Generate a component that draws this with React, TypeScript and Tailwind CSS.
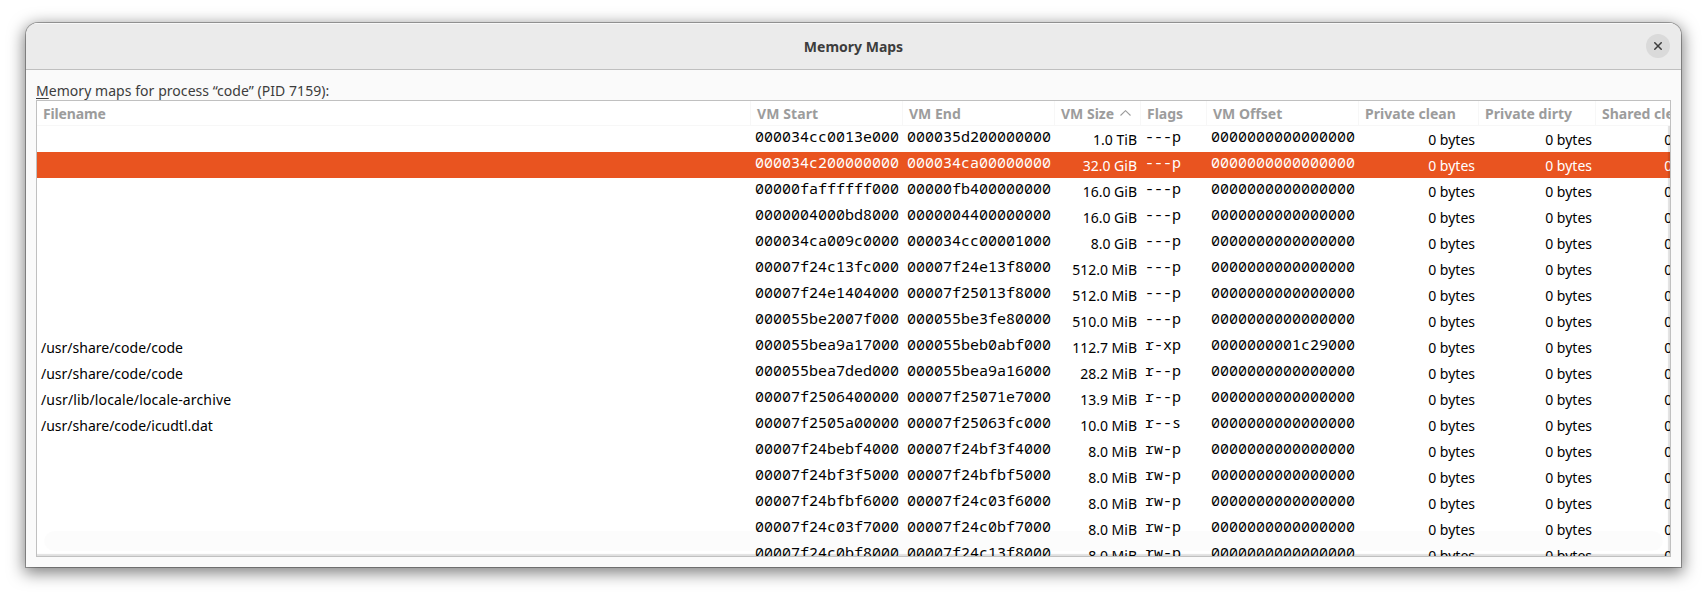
import React from "react";

type MapRow = [file: string, start: string, end: string, size: string, flags: string, offset: string];

const Z = "0000000000000000";

const rows: MapRow[] = [
  ["", "000034cc0013e000", "000035d200000000", "1.0 TiB", "---p", Z],
  ["", "000034c200000000", "000034ca00000000", "32.0 GiB", "---p", Z],
  ["", "00000faffffff000", "00000fb400000000", "16.0 GiB", "---p", Z],
  ["", "0000004000bd8000", "0000004400000000", "16.0 GiB", "---p", Z],
  ["", "000034ca009c0000", "000034cc00001000", "8.0 GiB", "---p", Z],
  ["", "00007f24c13fc000", "00007f24e13f8000", "512.0 MiB", "---p", Z],
  ["", "00007f24e1404000", "00007f25013f8000", "512.0 MiB", "---p", Z],
  ["", "000055be2007f000", "000055be3fe80000", "510.0 MiB", "---p", Z],
  ["/usr/share/code/code", "000055bea9a17000", "000055beb0abf000", "112.7 MiB", "r-xp", "0000000001c29000"],
  ["/usr/share/code/code", "000055bea7ded000", "000055bea9a16000", "28.2 MiB", "r--p", Z],
  ["/usr/lib/locale/locale-archive", "00007f2506400000", "00007f25071e7000", "13.9 MiB", "r--p", Z],
  ["/usr/share/code/icudtl.dat", "00007f2505a00000", "00007f25063fc000", "10.0 MiB", "r--s", Z],
  ["", "00007f24bebf4000", "00007f24bf3f4000", "8.0 MiB", "rw-p", Z],
  ["", "00007f24bf3f5000", "00007f24bfbf5000", "8.0 MiB", "rw-p", Z],
  ["", "00007f24bfbf6000", "00007f24c03f6000", "8.0 MiB", "rw-p", Z],
  ["", "00007f24c03f7000", "00007f24c0bf7000", "8.0 MiB", "rw-p", Z],
  ["", "00007f24c0bf8000", "00007f24c13f8000", "8.0 MiB", "rw-p", Z],
];

const headers = ["Filename", "VM Start", "VM End", "VM Size", "Flags", "VM Offset", "Private clean", "Private dirty", "Shared clean"];

const GRID = "grid w-[1692px] grid-cols-[714px_152px_152px_86px_66px_152px_120px_117px_119px]";

function Mono({ children }: { children: string }) {
  return (
    <div className="whitespace-pre pl-[4px] font-['Noto_Sans_Mono','DejaVu_Sans_Mono',monospace] text-[15px] leading-[21px]">
      {children}
    </div>
  );
}

function Num({ children }: { children: string }) {
  return <div className="whitespace-nowrap pr-[4px] pt-[2px] text-right leading-[24px]">{children}</div>;
}

export default function App() {
  return (
    <div className="h-[596px] overflow-hidden bg-white px-[26px] pb-[29px] pt-[23px] font-['Noto_Sans',sans-serif] text-[14px]">
      <div className="flex h-[544px] w-[1655px] flex-col overflow-hidden rounded-t-[12px] bg-[#fafafa] shadow-[0_0_0_1px_rgba(0,0,0,0.3),0_4px_16px_2px_rgba(0,0,0,0.5)]">
        <header className="grid h-[47px] shrink-0 grid-cols-[1fr_auto_1fr] items-center border-b border-[#bfbfbf] bg-[#ebebeb] px-[11px] shadow-[inset_0_1px_0_#f8f8f8]">
          <span />
          <h1 className="font-bold text-[#3d3d3d]">Memory Maps</h1>
          <button aria-label="Close" className="flex size-6 items-center justify-center justify-self-end rounded-full bg-[#dadada]">
            <svg width="8" height="8" viewBox="0 0 8 8" stroke="#3d3d3d" strokeWidth="1.5">
              <path d="M0.3 0.3 7.7 7.7M7.7 0.3 0.3 7.7" />
            </svg>
          </button>
        </header>
        <div className="flex flex-col px-[10px] pt-[10px]">
          <div className="h-[20px] shrink-0 leading-[21px] tracking-[0.05px] text-[#3d3d3d]">
            <span className="underline underline-offset-2">M</span>emory maps for process “code” (PID 7159):
          </div>
          <div className="relative h-[457px] overflow-hidden border border-[#c0c0c0] bg-white">
            <div className={`${GRID} h-[25px] border-b border-[#f7f7f7] font-bold text-[#9c9c9c]`}>
              {headers.map((h) => (
                <div
                  key={h}
                  className={`flex items-center whitespace-nowrap border-r border-[#f7f7f7] pl-[6px] pt-px leading-[24px] ${h === "Filename" ? "tracking-[-0.15px]" : ""} ${h === "VM Start" ? "tracking-[0.1px]" : ""}`}
                >
                  {h}
                  {h === "VM Size" && (
                    <svg className="ml-[6px] mb-[3px]" width="11" height="6" viewBox="0 0 11 6" fill="none" stroke="#9c9c9c" strokeWidth="1.1">
                      <path d="M0.5 5.5 5.5 0.7 10.5 5.5" />
                    </svg>
                  )}
                </div>
              ))}
            </div>
            <div className="text-black">
              {rows.map(([file, start, end, size, flags, offset], i) => (
                <div key={start} className={`${GRID} h-[26px] ${i === 1 ? "bg-[#e95420] text-white" : ""}`}>
                  <div className={`pl-[4px] pt-[2px] leading-[24px] ${file.startsWith("/usr/lib") ? "tracking-[0.14px]" : ""}`}>{file}</div>
                  <Mono>{start}</Mono>
                  <Mono>{end}</Mono>
                  <Num>{size}</Num>
                  <Mono>{flags}</Mono>
                  <Mono>{offset}</Mono>
                  <Num>0 bytes</Num>
                  <Num>0 bytes</Num>
                  <Num>0 bytes</Num>
                </div>
              ))}
            </div>
            <div className="pointer-events-none absolute bottom-[5px] left-[7px] right-[7px] h-[20px] rounded-full bg-black/[0.012]" />
            <div className="pointer-events-none absolute inset-x-0 bottom-0 top-[25px] shadow-[inset_-2px_-2px_1px_rgba(0,0,0,0.12)]" />
          </div>
        </div>
      </div>
    </div>
  );
}
